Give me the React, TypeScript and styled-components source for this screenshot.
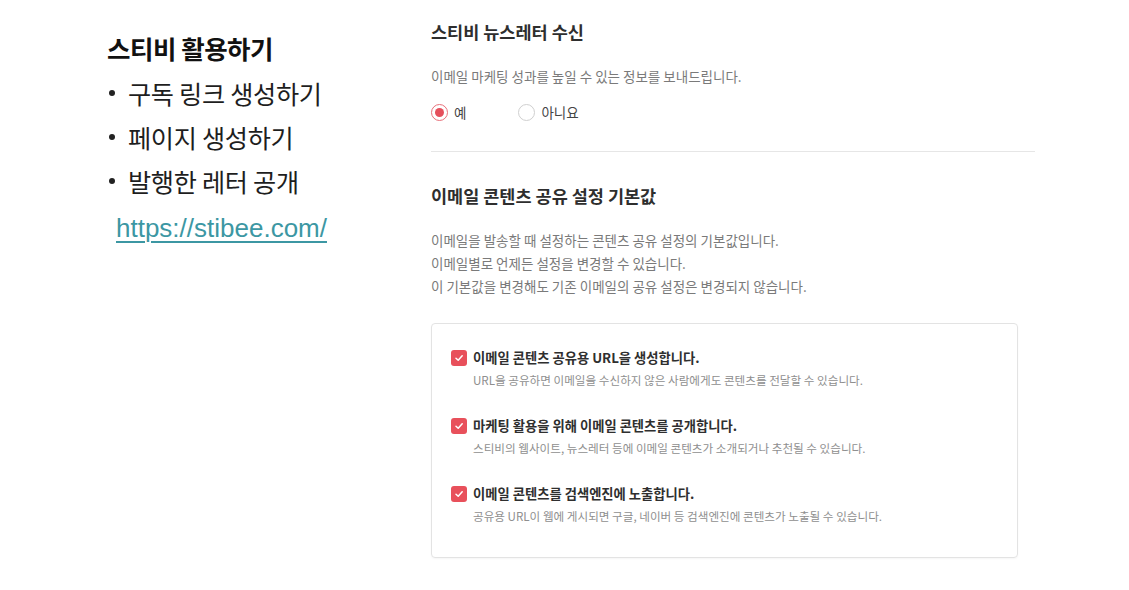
import React from 'react'
import styled, {createGlobalStyle} from 'styled-components'

const GlobalStyle = createGlobalStyle`
  html, body {
    margin: 0;
    padding: 0;
    background: #ffffff;
  }
  body {
    font-family: "Noto Sans CJK KR", "Noto Sans", sans-serif;
  }
`

const Page = styled.div`
  display: flex;
  width: 1129px;
  height: 590px;
  box-sizing: border-box;
  padding-left: 107px;
  overflow: hidden;
`

const Guide = styled.div`
  width: 324px;
  padding-top: 30px;
  display: flex;
  flex-direction: column;
`

const GuideTitle = styled.div`
  font-size: 25.5px;
  font-weight: 700;
  line-height: 36px;
  color: #111;
  letter-spacing: -0.5px;
`

const GuideList = styled.ul`
  list-style: none;
  margin: 5px 0 0;
  padding: 0;
`

const GuideItem = styled.li`
  display: flex;
  align-items: center;
  font-size: 25.2px;
  line-height: 44px;
  color: #1e1e1e;
  letter-spacing: -0.3px;

  &::before {
    content: '';
    width: 6px;
    height: 6px;
    border-radius: 50%;
    background: #222;
    margin: 0 13px 0 2px;
  }
`

const GuideLink = styled.a`
  margin: 10px 0 0 9px;
  font-family: "Liberation Sans", Arial, sans-serif;
  font-size: 26px;
  line-height: 30px;
  color: #3c97a3;
  text-decoration: underline;
  text-decoration-thickness: 1.5px;
  text-underline-offset: 4px;
`

const Settings = styled.div`
  width: 604px;
  padding-top: 21px;
  display: flex;
  flex-direction: column;
`

const SectionTitle = styled.h2`
  margin: 0;
  font-size: 17.5px;
  font-weight: 700;
  line-height: 22px;
  color: #2e2e2e;
`

const Description = styled.p<{ $top: number }>`
  margin: ${({$top}) => $top}px 0 0;
  font-size: 13.5px;
  line-height: 23px;
  color: #7a7a7a;
`

const RadioRow = styled.div`
  display: flex;
  gap: 52px;
  margin-top: 14px;
`

const RadioLabel = styled.label`
  display: flex;
  align-items: center;
  gap: 6px;
  font-size: 13.5px;
  line-height: 20px;
  color: #444;
`

const RadioCircle = styled.span<{ $checked?: boolean }>`
  box-sizing: border-box;
  width: 17px;
  height: 17px;
  border-radius: 50%;
  border: 1px solid ${({$checked}) => $checked ? '#e8707a' : '#cfcfcf'};
  display: flex;
  align-items: center;
  justify-content: center;

  &::after {
    content: '';
    width: 9px;
    height: 9px;
    border-radius: 50%;
    background: ${({$checked}) => $checked ? '#e5505c' : 'transparent'};
  }
`

const Divider = styled.hr`
  margin: 29px 0 33px;
  border: none;
  border-top: 1px solid #e6e6e6;
  width: 604px;
`

const Card = styled.div`
  margin-top: 25px;
  width: 587px;
  box-sizing: border-box;
  border: 1px solid #e3e3e3;
  border-radius: 4px;
  box-shadow: 0 1px 2px rgba(0, 0, 0, 0.04);
  padding: 25px 19px 33px;
  display: flex;
  flex-direction: column;
  gap: 29px;
`

const Option = styled.div`
  display: grid;
  grid-template-columns: 16px 1fr;
  column-gap: 6px;
  row-gap: 5px;
  align-items: center;
`

const CheckBox = styled.span`
  width: 16px;
  height: 16px;
  border-radius: 3px;
  background: #e8505b;
  display: flex;
  align-items: center;
  justify-content: center;
`

const OptionLabel = styled.div`
  font-size: 13.3px;
  font-weight: 700;
  line-height: 18px;
  color: #2f2f2f;
`

const OptionHint = styled.div`
  grid-column: 2;
  font-size: 11.6px;
  line-height: 16px;
  color: #8f8f8f;
`

const Check = () => (
    <svg width="10" height="10" viewBox="0 0 10 10" fill="none">
        <path d="M2 5.2 L4.2 7.3 L8.2 2.8" stroke="#fff" strokeWidth="1.5" strokeLinecap="round" strokeLinejoin="round"/>
    </svg>
)

const options = [
    {
        label: '이메일 콘텐츠 공유용 URL을 생성합니다.',
        hint: 'URL을 공유하면 이메일을 수신하지 않은 사람에게도 콘텐츠를 전달할 수 있습니다.'
    },
    {
        label: '마케팅 활용을 위해 이메일 콘텐츠를 공개합니다.',
        hint: '스티비의 웹사이트, 뉴스레터 등에 이메일 콘텐츠가 소개되거나 추천될 수 있습니다.'
    },
    {
        label: '이메일 콘텐츠를 검색엔진에 노출합니다.',
        hint: '공유용 URL이 웹에 게시되면 구글, 네이버 등 검색엔진에 콘텐츠가 노출될 수 있습니다.'
    }
]

const App = () => {
    return (
        <React.Fragment>
            <GlobalStyle/>
            <Page>
                <Guide>
                    <GuideTitle>스티비 활용하기</GuideTitle>
                    <GuideList>
                        <GuideItem>구독 링크 생성하기</GuideItem>
                        <GuideItem>페이지 생성하기</GuideItem>
                        <GuideItem>발행한 레터 공개</GuideItem>
                    </GuideList>
                    <GuideLink href="#">https://stibee.com/</GuideLink>
                </Guide>
                <Settings>
                    <SectionTitle>스티비 뉴스레터 수신</SectionTitle>
                    <Description $top={22}>이메일 마케팅 성과를 높일 수 있는 정보를 보내드립니다.</Description>
                    <RadioRow>
                        <RadioLabel><RadioCircle $checked/>예</RadioLabel>
                        <RadioLabel><RadioCircle/>아니요</RadioLabel>
                    </RadioRow>
                    <Divider/>
                    <SectionTitle>이메일 콘텐츠 공유 설정 기본값</SectionTitle>
                    <Description $top={22}>
                        이메일을 발송할 때 설정하는 콘텐츠 공유 설정의 기본값입니다.<br/>
                        이메일별로 언제든 설정을 변경할 수 있습니다.<br/>
                        이 기본값을 변경해도 기존 이메일의 공유 설정은 변경되지 않습니다.
                    </Description>
                    <Card>
                        {options.map((option) => (
                            <Option key={option.label}>
                                <CheckBox><Check/></CheckBox>
                                <OptionLabel>{option.label}</OptionLabel>
                                <OptionHint>{option.hint}</OptionHint>
                            </Option>
                        ))}
                    </Card>
                </Settings>
            </Page>
        </React.Fragment>
    )
}

export default App
